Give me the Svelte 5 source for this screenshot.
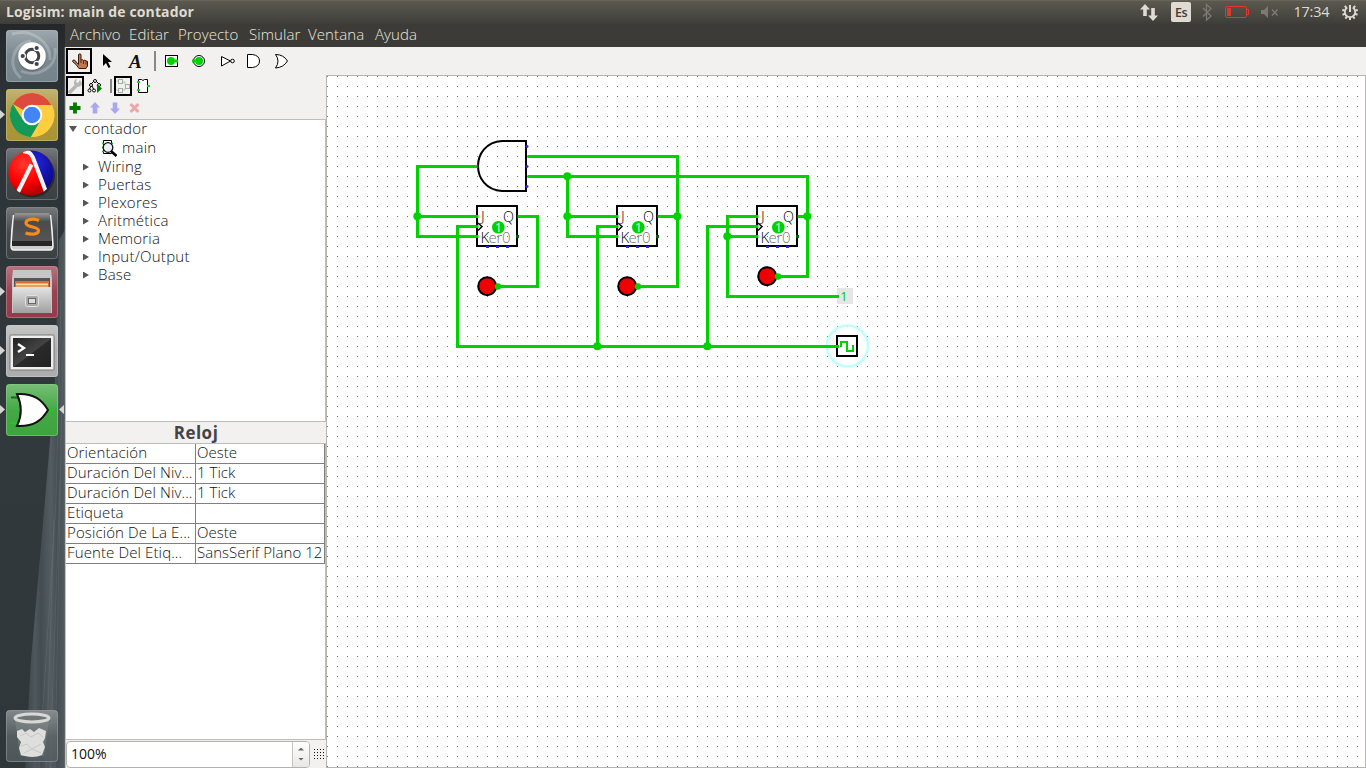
<script>
  const menus = [
    ['Archivo', 59], ['Editar', 49], ['Proyecto', 71], ['Simular', 59], ['Ventana', 67], ['Ayuda', 50]
  ];
  const libraries = ['Wiring', 'Puertas', 'Plexores', 'Aritmética', 'Memoria', 'Input/Output', 'Base'];
  const attributes = [
    ['Orientación', 'Oeste'],
    ['Duración Del Niv...', '1 Tick'],
    ['Duración Del Niv...', '1 Tick'],
    ['Etiqueta', ''],
    ['Posición De La E...', 'Oeste'],
    ['Fuente Del Etiq...', 'SansSerif Plano 12']
  ];
  const wires = [
    '477,166 417,166 417,236 478,236', '417,216 478,216',
    '517,216 537,216 537,286 498,286', '478,226 457,226 457,346 838,346',
    '527,156 677,156 677,286 638,286', '657,216 677,216',
    '527,176 807,176 807,276 778,276', '797,216 807,216',
    '567,176 567,236 618,236', '567,216 618,216',
    '618,226 597,226 597,346', '758,226 707,226 707,346',
    '758,216 727,216 727,296 838,296', '727,236 758,236'
  ];
  const junctions = [[417, 216], [567, 176], [567, 216], [677, 216], [807, 216], [727, 236], [597, 346], [707, 346]];
  const flipflops = [477, 617, 757];
  const leds = [[487, 286], [627, 286], [767, 276]];
  const teeth = [40, 75, 110, 145, 180, 215, 250, 285, 320];
</script>

<div class="desktop">
  <header class="titlebar">
    <div class="title">Logisim: main de contador</div>
    <svg class="tray" width="236" height="24" viewBox="1130 0 236 24">
      <g fill="#dfdbd2">
        <path d="M1145 4l5 5.500h-3.200V16h-3.600V9.500H1140z" />
        <path d="M1153 21l-5-5.500h3.200V8h3.600v7.500h3.200z" />
        <rect x="1171" y="2" width="20" height="20" rx="2" />
      </g>
      <text x="1175" y="17" class="lang" textLength="12.500">Es</text>
      <path d="M1203 8l8 8-4.500 4V4.500l4.500 4-8 8" fill="none" stroke="#7c7a73" stroke-width="1.300" />
      <g fill="none" stroke="#df382c">
        <rect x="1225.500" y="6.500" width="21" height="11" rx="1.500" />
        <path d="M1247 9.500h1.500v5H1247" />
      </g>
      <rect x="1227" y="8" width="4" height="8" fill="#df382c" />
      <path d="M1261 10h3l4-4v12l-4-4h-3z" fill="#7c7a73" />
      <path d="M1272 9.500l5.500 6M1277.500 9.500l-5.500 6" stroke="#7c7a73" stroke-width="1.500" />
      <text x="1293.500" y="17" class="clock" textLength="36">17:34</text>
      <g fill="none" stroke="#dfdbd2">
        <path d="M1347.300 7.500a5.200 5.200 0 1 0 5.400 0" stroke-width="1.800" />
        <path d="M1350 5v7" stroke-width="2" />
        {#each teeth as angle}<path d="M1350 6.500v-2.500" stroke-width="2" transform="rotate({angle} 1350 12)" />{/each}
      </g>
    </svg>
  </header>

  <div class="body">
    <svg class="launcher" width="65" height="744" viewBox="0 24 65 744">
      <defs>
        <linearGradient id="wall" x1="0" y1="0" x2="0" y2="1">
          <stop offset="0" stop-color="#24282b" /><stop offset=".1" stop-color="#2d3438" /><stop offset=".55" stop-color="#32393d" /><stop offset="1" stop-color="#30373b" />
        </linearGradient>
        <linearGradient id="wood" x1="0" y1="0" x2="1" y2="0">
          <stop offset="0" stop-color="#3d474c" /><stop offset=".25" stop-color="#566065" /><stop offset=".4" stop-color="#485156" /><stop offset=".65" stop-color="#5c666a" /><stop offset=".8" stop-color="#4b5458" /><stop offset="1" stop-color="#5b6468" />
        </linearGradient>
        <linearGradient id="shine" x1="0" y1="0" x2="0" y2="1">
          <stop offset="0" stop-color="#fff" stop-opacity=".32" /><stop offset=".5" stop-color="#fff" stop-opacity=".08" /><stop offset="1" stop-color="#fff" stop-opacity=".04" />
        </linearGradient>
        <linearGradient id="steel" x1="0" y1="0" x2="0" y2="1">
          <stop offset="0" stop-color="#e4e4e4" /><stop offset="1" stop-color="#a0a0a0" />
        </linearGradient>
        <linearGradient id="key" x1="0" y1="0" x2="0" y2="1">
          <stop offset="0" stop-color="#999" /><stop offset=".3" stop-color="#4b4b4b" /><stop offset="1" stop-color="#555" />
        </linearGradient>
        <linearGradient id="screen" x1="0" y1="0" x2="1" y2="1">
          <stop offset="0" stop-color="#222" /><stop offset=".5" stop-color="#444" /><stop offset=".52" stop-color="#2a2a2a" /><stop offset="1" stop-color="#222" />
        </linearGradient>
        <radialGradient id="red" cx=".35" cy=".3" r=".8"><stop offset="0" stop-color="#ff3a30" /><stop offset=".5" stop-color="#f00" /><stop offset="1" stop-color="#900" /></radialGradient>
        <radialGradient id="blue" cx=".3" cy=".3" r=".9"><stop offset="0" stop-color="#2222d8" /><stop offset="1" stop-color="#00006a" /></radialGradient>
        <clipPath id="ball"><circle cx="31" cy="173" r="22.500" /></clipPath>
        <clipPath id="tile"><rect x="6" y="30" width="52" height="52" rx="3" /></clipPath>
      </defs>
      <rect y="24" width="65" height="744" fill="url(#wall)" />
      <path d="M65 230V768H25L31 660 45 500 55 380 59 240z" fill="url(#wood)" opacity=".8" />
      <path d="M61 300l-5 200-17 268M63 340l-8 428M54 520L46 768M60 480l-10 288" stroke="#7c868a" stroke-width="1" fill="none" opacity=".25" />
      <rect x="64" y="47" width="1" height="721" fill="#666c6e" opacity=".6" />

      {#snippet tile(y, color, opacity = 1)}
        <rect x="6" {y} width="52" height="52" rx="3" fill={color} fill-opacity={opacity} />
        <rect x="6.500" y={y + .5} width="51" height="51" rx="3" fill="url(#shine)" stroke="#fff" stroke-opacity=".26" />
      {/snippet}

      {@render tile(30, '#6f7e86')}
      <g clip-path="url(#tile)" fill="none" stroke="#fff" stroke-opacity=".22" stroke-width="3">
        <path d="M12 34c20-6 39 8 38 26M55 48c3 20-18 30-34 23M21 78c-15-12-8-35 10-37" />
      </g>
      <circle cx="32" cy="57.500" r="14" fill="#4b565d" opacity=".4" />
      <circle cx="32" cy="56" r="13.800" fill="#fff" />
      <circle cx="32" cy="56" r="6.800" fill="none" stroke="#3c4448" stroke-width="3" />
      <g fill="#3c4448" stroke="#fff" stroke-width="1.200">
        <circle cx="22.700" cy="56" r="2.700" /><circle cx="36.700" cy="48" r="2.700" /><circle cx="36.700" cy="64" r="2.700" />
      </g>

      {@render tile(89, '#a58f2e')}
      <circle cx="32" cy="115" r="22" fill="#fbc935" />
      <path d="M32 115L12.900 104A22 22 0 0 1 51.500 105H32z" fill="#dc4b3e" />
      <path d="M12.900 104A22 22 0 0 0 31 137l10-17-9-5-9 5z" fill="#149a58" />
      <path d="M40 105h12a22 22 0 0 1-21 32l10.500-18z" fill="#ffcd40" />
      <circle cx="32" cy="115" r="10.300" fill="#fff" />
      <circle cx="32" cy="115" r="8.300" fill="#4285f4" />

      {@render tile(148, '#33383b')}
      <circle cx="32.500" cy="175" r="22.500" fill="#111" opacity=".5" />
      <g clip-path="url(#ball)">
        <rect x="8" y="150" width="46" height="46" fill="url(#red)" />
        <path d="M28 148c6 8 10 28 19 46h12v-46z" fill="url(#blue)" />
        <path d="M23 151.500c7-1 9.500 4 11.500 10l12.500 33M31.500 164.500L17 194" fill="none" stroke="#f4f4f4" stroke-width="4" />
      </g>

      {@render tile(207, '#34393c')}
      <path d="M13.500 215q-2 15-2.500 31 0 4 3 4h36q3 0 3-4-.5-16-2.500-31" fill="#ccc" stroke="#f0f0f0" stroke-width="1.500" />
      <path d="M16 213h32q2 0 2 3l2 26H12l2-26q0-3 2-3z" fill="url(#key)" />
      <path d="M12 241h40v5H12z" fill="#262626" />
      <path d="M39 220.500c-5-2.500-13-1.500-13 2.500 0 4.500 12.500 3.500 12.500 7.500s-7 4.500-13 2.500" fill="none" stroke="#f58b1e" stroke-width="3.200" />

      {@render tile(266, '#923243')}
      <path d="M13 270h38l1 8v35H12v-35z" fill="#c6c6c6" />
      <path d="M14 278h36v10H14z" fill="#555" />
      <path d="M15 281h34v6H15z" fill="#df6b30" /><path d="M16 283.500h32v1.500H16z" fill="#fbd9a8" /><path d="M16 285h32v3H16z" fill="#eaa05a" />
      <rect x="13" y="287" width="38" height="26" rx="1" fill="url(#steel)" />
      <rect x="25.500" y="295.500" width="13" height="11" rx="2" fill="#aaa" stroke="#e2e2e2" /><rect x="28.500" y="298.500" width="7" height="5" fill="#ddd" stroke="#666" />

      {@render tile(325, '#a9a9aa')}
      <rect x="10" y="335" width="44" height="35" rx="1" fill="#eee" stroke="#777" />
      <rect x="13" y="338" width="38" height="29" fill="url(#screen)" />
      <path d="M18 344l6 4-6 4" fill="none" stroke="#fff" stroke-width="2.300" /><path d="M26 355h8" stroke="#fff" stroke-width="2" />

      {@render tile(384, '#35a136')}
      <path d="M11 423h8M48 410.500h6" stroke="#00e000" stroke-width="2" /><path d="M11 397.500h7" stroke="#176b18" stroke-width="2" />
      <path d="M17 394c17-1 25 6 31 16-6 10-14 17-31 16 5-10 5-21 0-32z" fill="#fff" stroke="#111" stroke-width="2" />

      {@render tile(710, '#4c5559', .8)}
      <path d="M15 720h34l-5 36H20z" fill="#8d9494" opacity=".35" />
      <path d="M17 731l5-2 3 3 5-3 4 3 5-4 7 3-1 7-2 4 2 5-3 8c-6 3-16 2-21 0l-2-7 2-6-4-5z" fill="#dededd" />
      <path d="M20 736l6-3 5 4 7-4 5 4M21 746l6-2 5 5 9-5M24 753l8-4 9 4" stroke="#c6c8c7" fill="none" />
      <ellipse cx="32" cy="718" rx="17" ry="4" fill="#6e7676" stroke="#d8d9d6" stroke-width="3" />

      <g fill="#d5d5d3">
        <path d="M0 110l5 4.500-5 4.500zM0 287l5 4.500-5 4.500zM0 346l5 4.500-5 4.500zM0 405l5 4.500-5 4.500zM64 405l-5 4.500 5 4.500z" />
      </g>
    </svg>

    <main class="window">
      <nav class="menubar">
        {#each menus as [name, w]}<span style:width="{w}px">{name}</span>{/each}
      </nav>

      <div class="workspace">
        <section class="side">
          <svg class="tools" width="261" height="72" viewBox="65 47 261 72">
            <rect x="67" y="49" width="24" height="24" fill="none" stroke="#000" stroke-width="2" />
            <path d="M78.500 64.500V54.500q1.500-1.500 2.500 0v5.500q1.500-1 2.500.5 1.500-1 2.500.5 1.500-.5 1.500 1v4l-1.500 2.500h-7l-3-4-3.500-3q0-2 2-1.500z" fill="#c07850" stroke="#3b1c10" />
            <path d="M81 60v3M83.500 61v3M86 61.500v3" stroke="#5a2f1c" />
            <path d="M103 54v12l3-3 2.500 5 2-1-2.500-5h4z" fill="#000" />
            <text x="129" y="68" class="letter">A</text>
            <path d="M155 51v20" stroke="#888" stroke-width="2" />
            <rect x="165.500" y="55.500" width="12" height="11" fill="#fff" stroke="#000" />
            <circle cx="171" cy="61" r="4" fill="#00d200" /><rect x="175" y="59.500" width="3" height="3" fill="#00d200" />
            <circle cx="199" cy="61" r="5.500" fill="#fff" stroke="#000" /><circle cx="199" cy="61" r="4" fill="#00d200" /><rect x="192" y="59.500" width="3" height="3" fill="#00d200" />
            <g fill="#fff" stroke="#000">
              <path d="M221.500 56.500l9 4.500-9 5z" /><circle cx="232.500" cy="61" r="1.800" />
              <path d="M247.500 54.500h5q7 1 7 6.500t-7 6.500h-5z" />
              <path d="M275.500 54.500q8 0 12 6.500-4 6.500-12 7 5-7 0-13.500z" />
            </g>
            <g fill="none" stroke="#000" stroke-width="2"><rect x="67" y="77" width="16" height="18" /><rect x="115" y="77" width="16" height="18" /></g>
            <path d="M69 93l7-7" stroke="#b5b5b5" stroke-width="3.500" /><path d="M80 80l-2 3-2-1 1-3a4 4 0 1 0 5 4z" fill="#b5b5b5" />
            <g fill="#fff" stroke="#000">
              <path d="M91 84l4-4 4 4M89.500 89l2-4 2 4M97 85l3 5" fill="none" />
              <circle cx="95" cy="81" r="1.500" /><circle cx="91" cy="85" r="1.500" /><circle cx="99" cy="85" r="1.500" /><circle cx="89.500" cy="90.500" r="1.500" /><circle cx="94" cy="90.500" r="1.500" />
            </g>
            <path d="M97 84l5 4.500-5 4.500z" fill="#008000" />
            <path d="M111 79v14" stroke="#888" stroke-width="2" />
            <g fill="none" stroke="#aaa"><rect x="118.500" y="79.500" width="4" height="4" /><rect x="118.500" y="88.500" width="4" height="4" /><rect x="125.500" y="84.500" width="4" height="4" /></g>
            <path d="M116 81h2M116 90h2M123 82h2v3M123 90h2v-2" fill="none" stroke="#9ddc9d" />
            <path d="M138.500 79.500h3q1.500 2 3 0h3v13h-9z" fill="#fff" stroke="#000" />
            <path d="M137 82h3M137 90h3M147 86h3" stroke="#00e000" stroke-width="2" />
            <path d="M75 102.500v11M69.500 108h11" stroke="#007b00" stroke-width="3.800" />
            <g fill="#a8a8ee"><path d="M95 102l5 5.500h-2.700v6h-4.600v-6H90z" /><path d="M115 114l5-5.500h-2.700v-6h-4.600v6H110z" /></g>
            <path d="M130.500 104l8 8M138.500 104l-8 8" stroke="#eca6a6" stroke-width="3" />
          </svg>

          <div class="tree">
            <div class="row root"><i class="open"></i><span>contador</span></div>
            <div class="row circuit">
              <svg width="18" height="18" viewBox="0 0 18 18">
                <path d="M3.500 1.500h8v13h-8z" fill="#fff" stroke="#000" />
                <path d="M2 4.500h2M2 8.500h2M2 12.500h2M11 4.500h2" stroke="#00c800" stroke-width="1.500" />
                <circle cx="8" cy="8.500" r="4.800" fill="#eef" stroke="#111" stroke-width="1.300" />
                <path d="M11.500 12.500l5 4.500" stroke="#000" stroke-width="2.500" />
              </svg>
              <span>main</span>
            </div>
            {#each libraries as name}
              <div class="row lib"><i></i><span>{name}</span></div>
            {/each}
          </div>

          <h2>Reloj</h2>
          <div class="attrs">
            {#each attributes as [key, value]}
              <div class="attr"><span>{key}</span><span class="value">{value}</span></div>
            {/each}
          </div>

          <footer>
            <div class="zoom"><span>100%</span><div class="spin"><i class="up"></i><i class="down"></i></div></div>
            <svg width="12" height="11" viewBox="0 0 12 11">
              {#each [0, 3, 6, 9] as y}{#each [1, 4, 7, 10] as x}<rect {x} {y} width="1" height="1" fill="#111" />{/each}{/each}
            </svg>
          </footer>
        </section>

        <svg class="canvas" width="1038" height="691" viewBox="327 76 1038 691">
          <defs>
            <pattern id="grid" x="327" y="76" width="10" height="10" patternUnits="userSpaceOnUse"><rect width="1" height="1" fill="#777" /></pattern>
          </defs>
          <rect x="327" y="76" width="1038" height="691" fill="url(#grid)" />
          <path d="M526 141h-24c-32 2-32 48 0 50h24z" fill="none" stroke="#000" stroke-width="2" />
          {#each flipflops as x}
            <rect {x} y="206" width="40" height="40" fill="none" stroke="#000" stroke-width="2" />
            <path d="M{x + 1} 223l4 3.500-4 4" fill="none" stroke="#000" stroke-width="1.500" />
          {/each}
          <g transform="translate(.5 .5)" fill="none" stroke="#00d200" stroke-width="3">
            {#each wires as points}<polyline {points} />{/each}
          </g>
          {#each junctions as [x, y]}<circle cx={x + .3} cy={y + .3} r="4" fill="#00d200" />{/each}
          {#each [146, 166, 186] as y}<path d="M525.500 {y + .5}h3M527 {y - 1}v3" stroke="#2626ff" stroke-width="1.500" />{/each}
          {#each flipflops as x}
            {#each [10, 20, 30] as dx}<rect x={x + dx - 1} y="246" width="3" height="2" fill="#2626ff" />{/each}
            <rect x={x + 39} y="235" width="3" height="3" fill="#006400" />
            <g class="labels">
              <text x={x + 4} y="222" class="port">J</text>
              <text x={x + 26} y="222" class="port" textLength="11" lengthAdjust="spacingAndGlyphs">Q</text>
              <text x={x + 3.500} y="243" class="port">K</text>
              <text x={x + 11.500} y="243" class="port dim" textLength="22">er0</text>
            </g>
            <circle cx={x + 21.300} cy="227.300" r="6.300" fill="#00d200" />
            <g class="labels"><text x={x + 18} y="231.500" class="bit">1</text></g>
          {/each}
          {#each leds as [x, y]}
            <circle cx={x + .2} cy={y + .2} r="9" fill="#f00000" stroke="#000" stroke-width="2" />
            <circle cx={x + 11} cy={y + .5} r="3.200" fill="#00d200" />
          {/each}
          <rect x="837" y="288" width="16" height="16" fill="#e6e6e6" />
          <path d="M837 296.500h2" stroke="#00d200" stroke-width="3" />
          <g class="labels"><text x="840.500" y="301" class="bit green">1</text></g>
          <circle cx="847.500" cy="346" r="20.500" fill="none" stroke="#c0ffff" stroke-width="2.500" />
          <path d="M825 346.500h12" stroke="#00d200" stroke-width="3" />
          <rect x="837" y="336" width="20" height="20" fill="#fff" stroke="#000" stroke-width="2" />
          <path d="M836 346.500h3" stroke="#00d200" stroke-width="3" />
          <path d="M841 347v-5h6v9h6v-6" fill="none" stroke="#00d200" stroke-width="2" />
        </svg>
      </div>
    </main>
  </div>
</div>

<style>
  :global(body) { margin: 0; overflow: hidden; }
  * { box-sizing: border-box; }
  .desktop { width: 1366px; height: 768px; display: flex; flex-direction: column; font: 300 15px/18px "Open Sans", sans-serif; color: #111; background: #f2f1f0; }
  svg { display: block; flex: none; }
  .titlebar { height: 24px; flex: none; display: flex; justify-content: space-between; background: linear-gradient(#5b594f, #3e3d38); border-top: 1px solid #68665c; color: #dfdbd2; }
  .title { padding-left: 6px; font: 700 14px/22px "Open Sans", sans-serif; letter-spacing: .12px; }
  .tray { margin-top: -1px; }
  .lang { font: 600 12.500px "Open Sans", sans-serif; fill: #3c3b37; }
  .clock { font: 500 14.500px "Open Sans", sans-serif; fill: #dfdbd2; }
  .body { display: flex; height: 744px; }
  .window { width: 1301px; display: flex; flex-direction: column; }
  .menubar { height: 23px; background: #3c3b37; color: #ece8df; display: flex; padding-left: 5px; line-height: 21px; letter-spacing: .1px; white-space: nowrap; }
  .workspace { display: flex; height: 721px; }
  .side { width: 261px; display: flex; flex-direction: column; border-left: 1px solid #c5c2be; }
  .tools { margin-left: -1px; }
  .tree { height: 303px; background: #fff; border: 1px solid #c0bdb8; border-left: 0; white-space: nowrap; letter-spacing: .25px; }
  .row { height: 18px; display: flex; align-items: center; }
  .row span { line-height: 16px; padding-bottom: 2px; }
  .root { height: 18px; padding-left: 3px; }
  .root span { margin-left: 7px; }
  .circuit { height: 20px; padding-left: 34px; gap: 4px; }
  .lib { padding-left: 17px; gap: 9px; }
  .row i { width: 6px; height: 7px; background: #555; clip-path: polygon(0 0, 100% 50%, 0 100%); }
  .row i.open { width: 8px; height: 6px; clip-path: polygon(0 0, 100% 0, 50% 100%); }
  h2 { margin: 0; height: 21px; text-align: center; font: 700 17px/21px "Open Sans", sans-serif; letter-spacing: .5px; color: #444; }
  .attrs { height: 297px; background: #fff; border: 1px solid #c0bdb8; border-left: 0; }
  .attr { display: grid; grid-template-columns: 130px 129px; height: 20px; width: 259px; line-height: 16px; letter-spacing: .12px; }
  .attr span { border-right: 1px solid #808080; border-bottom: 1px solid #808080; padding-left: 1px; white-space: nowrap; }
  .attr .value { letter-spacing: .03px; }
  footer { height: 28px; display: flex; align-items: center; gap: 3px; }
  .zoom { width: 244px; height: 27px; border: 1px solid #b5b2ad; border-radius: 4px; background: #fff; display: flex; justify-content: space-between; align-items: center; padding-left: 4px; }
  .zoom span { padding-bottom: 1px; font-weight: 400; font-size: 14px; }
  .spin { width: 17px; height: 25px; border-left: 1px solid #c8c5c0; background: linear-gradient(#fff, #e8e7e5); border-radius: 0 3px 3px 0; display: flex; flex-direction: column; align-items: center; justify-content: center; gap: 7px; }
  .spin i { width: 6px; height: 3px; background: #666; clip-path: polygon(50% 0, 100% 100%, 0 100%); }
  .spin .down { clip-path: polygon(0 0, 100% 0, 50% 100%); }
  .canvas { margin-top: 28px; width: 1040px; height: 693px; border: 1px solid #b8b5b0; background: #fff; }
  .labels { opacity: .99; }
  .letter { font: italic 700 19px "Liberation Serif", serif; fill: #111; }
  .port { font: 300 15px "Open Sans", sans-serif; fill: #000; }
  .dim { fill: #707070; }
  .bit { font: 400 12px "Open Sans", sans-serif; fill: #fff; }
  .green { fill: #00c000; }
</style>
